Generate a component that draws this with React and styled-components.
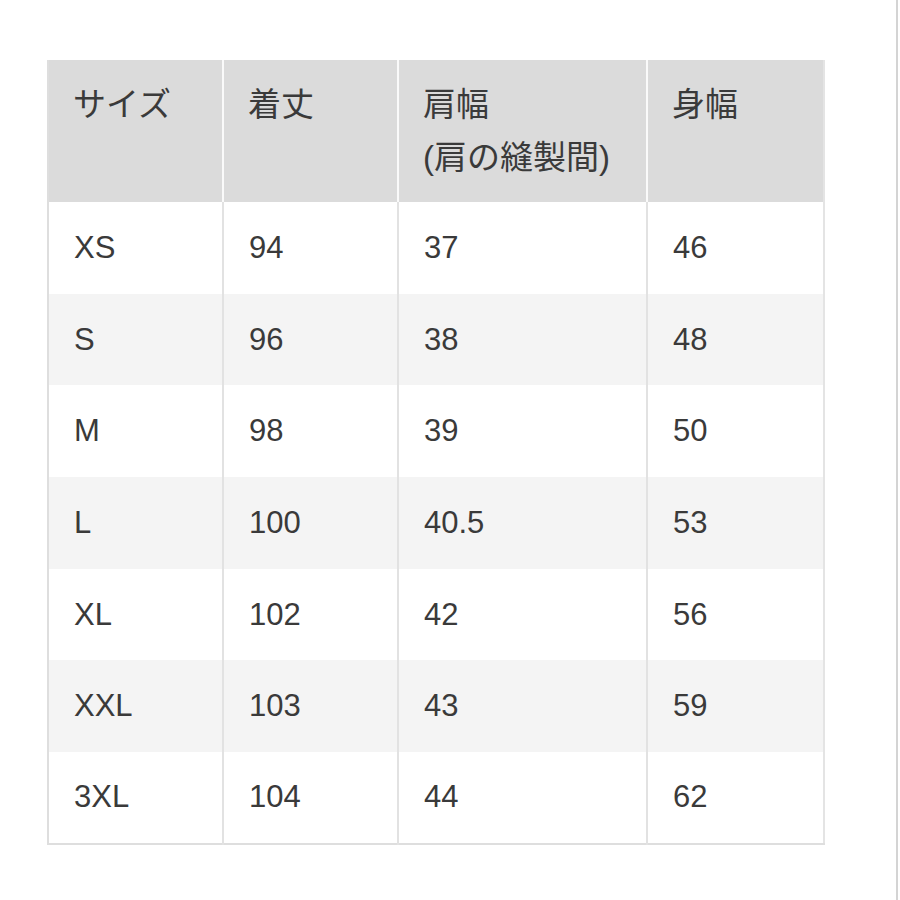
import React from "react";
import styled, { createGlobalStyle } from "styled-components";

const Global = createGlobalStyle`
  html, body { margin: 0; padding: 0; background: #fff; }
  body { font-family: "Liberation Sans", "Noto Sans CJK JP", sans-serif; }
`;

const Page = styled.div`
  box-sizing: border-box;
  width: 898px;
  height: 900px;
  border-right: 2px solid #d4d4d4;
  padding: 60px 0 0 47px;
`;

const Table = styled.table`
  border-collapse: collapse;
  table-layout: fixed;
  width: 776px;
  border-left: 2px solid #dedede;
  border-bottom: 2px solid #dedede;
  border-right: 2px solid #e4e4e4;
  color: #3a3a3a;
  font-size: 31px;
`;

const Col = styled.col`
  width: ${(p) => p.$w}px;
`;

const HeadCell = styled.th`
  background: #dbdbdb;
  text-align: left;
  vertical-align: top;
  font-weight: 400;
  font-size: 33px;
  line-height: 53px;
  padding: 18px 10px 18px 24px;
  height: 106px;
  border-right: 2px solid #fafafa;
  &:last-child { border-right: none; }
`;

const Row = styled.tr`
  background: ${(p) => (p.$alt ? "#f4f4f4" : "#ffffff")};
`;

const Cell = styled.td`
  height: 91.7px;
  box-sizing: border-box;
  padding: 0 10px 0 25px;
  vertical-align: middle;
  border-right: 2px solid #e2e2e2;
  &:last-child { border-right: none; }
`;

const rows = [
  ["XS", "94", "37", "46"],
  ["S", "96", "38", "48"],
  ["M", "98", "39", "50"],
  ["L", "100", "40.5", "53"],
  ["XL", "102", "42", "56"],
  ["XXL", "103", "43", "59"],
  ["3XL", "104", "44", "62"],
];

export default function App() {
  return (
    <>
      <Global />
      <Page>
        <Table>
          <colgroup>
            <Col $w={175} />
            <Col $w={175} />
            <Col $w={249} />
            <Col $w={177} />
          </colgroup>
          <thead>
            <tr>
              <HeadCell>サイズ</HeadCell>
              <HeadCell>着丈</HeadCell>
              <HeadCell>
                肩幅
                <br />
                (肩の縫製間)
              </HeadCell>
              <HeadCell>身幅</HeadCell>
            </tr>
          </thead>
          <tbody>
            {rows.map((r, i) => (
              <Row key={r[0]} $alt={i % 2 === 1}>
                {r.map((c, j) => (
                  <Cell key={j}>{c}</Cell>
                ))}
              </Row>
            ))}
          </tbody>
        </Table>
      </Page>
    </>
  );
}
